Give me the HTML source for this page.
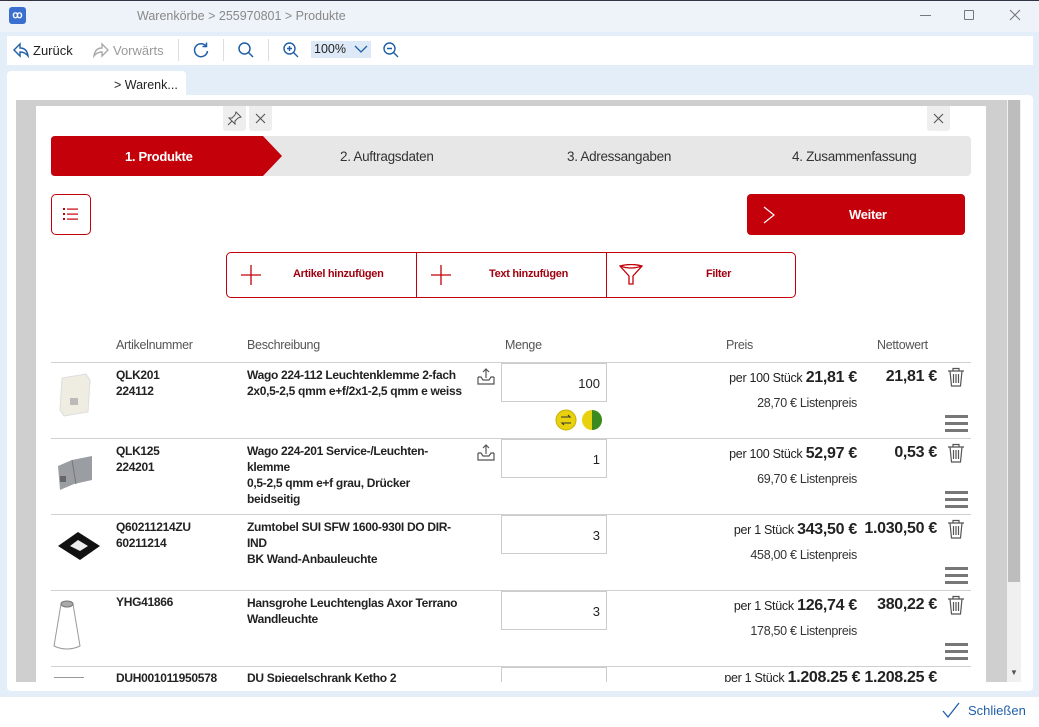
<!DOCTYPE html>
<html><head><meta charset="utf-8"><style>
*{box-sizing:border-box;margin:0;padding:0}
body{width:1039px;height:727px;overflow:hidden;background:#e4eef8;font-family:"Liberation Sans",sans-serif;position:relative;color:#222}
.a{position:absolute}
.t{font-size:12px;letter-spacing:-0.3px}
.b{font-weight:bold}
.hdr{font-size:12.5px;color:#555;letter-spacing:-0.3px}
.sep{position:absolute;left:51px;width:920px;height:1px;background:#d0d0d0}
.qty{position:absolute;left:501px;width:106px;height:39px;border:1px solid #ccc;background:#fff;font-size:13px;text-align:right;padding:12px 6px 0 0;color:#222}
.r{text-align:right}
.ham{position:absolute;left:945px;width:23px;height:3px;background:#777;box-shadow:0 7px 0 #777,0 14px 0 #777}
</style></head><body>
<div class="a" style="left:0;top:0;width:1039px;height:32px;background:#eef3f9;border-top:1px solid #334"></div>
<div class="a" style="left:9px;top:7px;width:17px;height:17px;background:#3a6fd0;border-radius:3px;color:#fff;font-size:10px;font-weight:bold;text-align:center;line-height:17px">ꝏ</div>
<div class="a" style="left:137px;top:9px;font-size:12.5px;color:#888">Warenkörbe &gt; 255970801 &gt; Produkte</div>
<div class="a" style="left:920px;top:15px;width:11px;height:1px;background:#777"></div>
<div class="a" style="left:964px;top:10px;width:10px;height:10px;border:1px solid #777;border-radius:1px"></div>
<svg class="a" style="left:1009px;top:9px" width="12" height="12"><path d="M1 1L11 11M11 1L1 11" stroke="#777" stroke-width="1.1"/></svg>
<div class="a" style="left:7px;top:36px;width:1026px;height:29px;background:#fff"></div>
<svg class="a" style="left:12px;top:42px" width="18" height="16" viewBox="0 0 18 16"><path d="M8 2 L2 8 L8 14 L8 10 Q13 10 16 14 Q15 6 8 6Z" fill="none" stroke="#1f5fa8" stroke-width="1.4"/></svg>
<div class="a" style="left:33px;top:43px;font-size:13px;color:#222">Zurück</div>
<svg class="a" style="left:92px;top:42px" width="18" height="16" viewBox="0 0 18 16"><path d="M10 2 L16 8 L10 14 L10 10 Q5 10 2 14 Q3 6 10 6Z" fill="none" stroke="#aaa" stroke-width="1.4"/></svg>
<div class="a" style="left:113px;top:43px;font-size:13px;color:#999">Vorwärts</div>
<div class="a" style="left:178px;top:39px;width:1px;height:22px;background:#ddd"></div>
<svg class="a" style="left:192px;top:41px" width="18" height="18" viewBox="0 0 18 18"><path d="M14 5 A6.5 6.5 0 1 0 15.5 10" fill="none" stroke="#1f5fa8" stroke-width="1.5"/><path d="M14.5 1.5 L14.5 5.5 L10.5 5.5" fill="none" stroke="#1f5fa8" stroke-width="1.5"/></svg>
<div class="a" style="left:223px;top:39px;width:1px;height:22px;background:#ddd"></div>
<svg class="a" style="left:237px;top:41px" width="18" height="18" viewBox="0 0 18 18"><circle cx="7.5" cy="7.5" r="5.5" fill="none" stroke="#1f5fa8" stroke-width="1.5"/><path d="M11.5 11.5 L16 16" stroke="#1f5fa8" stroke-width="1.5"/></svg>
<div class="a" style="left:268px;top:39px;width:1px;height:22px;background:#ddd"></div>
<svg class="a" style="left:282px;top:41px" width="18" height="18" viewBox="0 0 18 18"><circle cx="7.5" cy="7.5" r="5.5" fill="none" stroke="#1f5fa8" stroke-width="1.4"/><path d="M11.5 11.5 L16 16M5 7.5h5M7.5 5v5" stroke="#1f5fa8" stroke-width="1.4"/></svg>
<div class="a" style="left:311px;top:41px;width:60px;height:17px;background:#dde9f6"></div>
<div class="a" style="left:314px;top:42px;font-size:12.5px;color:#222">100%</div>
<svg class="a" style="left:354px;top:45px" width="14" height="9" viewBox="0 0 14 9"><path d="M1 1 L7 7 L13 1" fill="none" stroke="#1f5fa8" stroke-width="1.3"/></svg>
<svg class="a" style="left:382px;top:41px" width="18" height="18" viewBox="0 0 18 18"><circle cx="7.5" cy="7.5" r="5.5" fill="none" stroke="#1f5fa8" stroke-width="1.4"/><path d="M11.5 11.5 L16 16M5 7.5h5" stroke="#1f5fa8" stroke-width="1.4"/></svg>
<div class="a" style="left:7px;top:71px;width:179px;height:26px;background:#fff;border-radius:4px 4px 0 0"></div>
<div class="a" style="left:114px;top:78px;font-size:12.5px;color:#222">&gt; Warenk...</div>
<div class="a" style="left:7px;top:95px;width:1026px;height:596px;background:#fff;border-radius:0 4px 4px 4px"></div>
<div class="a" style="left:16px;top:100px;width:991px;height:582px;background:#cfcfcf"></div>
<div class="a" style="left:1007px;top:100px;width:14px;height:582px;background:#f0f0f0"></div>
<div class="a" style="left:1008px;top:100px;width:12px;height:482px;background:#bdbdbd"></div>
<div class="a" style="left:1010px;top:668px;font-size:8px;color:#555">▼</div>
<div class="a" style="left:36px;top:106px;width:950px;height:576px;background:#fff"></div>
<div class="a" style="left:223px;top:106px;width:23px;height:25px;background:#eee;border-radius:0 0 3px 3px"></div>
<svg class="a" style="left:227px;top:111px" width="15" height="15" viewBox="0 0 15 15"><path d="M9 1 L14 6 L11 7 L8 10 L8 13 L2 7 L5 7 L8 4Z M5 10 L1 14" fill="none" stroke="#555" stroke-width="1"/></svg>
<div class="a" style="left:249px;top:106px;width:23px;height:25px;background:#eee;border-radius:0 0 3px 3px"></div>
<svg class="a" style="left:255px;top:113px" width="11" height="11"><path d="M1 1L10 10M10 1L1 10" stroke="#555" stroke-width="1.1"/></svg>
<div class="a" style="left:927px;top:106px;width:23px;height:25px;background:#eee;border-radius:0 0 3px 3px"></div>
<svg class="a" style="left:933px;top:113px" width="11" height="11"><path d="M1 1L10 10M10 1L1 10" stroke="#555" stroke-width="1.1"/></svg>
<div class="a" style="left:51px;top:136px;width:920px;height:40px;background:#e7e7e7;border-radius:4px"></div>
<svg class="a" style="left:51px;top:136px" width="232" height="40" viewBox="0 0 232 40"><path d="M4 0 H212 L231 20 L212 40 H4 Q0 40 0 36 V4 Q0 0 4 0Z" fill="#c4000a"/></svg>
<div class="a t b" style="left:125px;top:149px;color:#fff;font-size:13px">1. Produkte</div>
<div class="a t" style="left:340px;top:149px;color:#333;font-size:13.5px">2. Auftragsdaten</div>
<div class="a t" style="left:567px;top:149px;color:#333;font-size:13.5px">3. Adressangaben</div>
<div class="a t" style="left:792px;top:149px;color:#333;font-size:13.5px">4. Zusammenfassung</div>
<div class="a" style="left:51px;top:194px;width:40px;height:41px;border:1px solid #c4000a;border-radius:5px"></div>
<svg class="a" style="left:63px;top:207px" width="16" height="14" viewBox="0 0 16 14"><g fill="#c4000a"><rect x="0" y="1" width="2" height="2"/><rect x="0" y="6" width="2" height="2"/><rect x="0" y="11" width="2" height="2"/><rect x="4" y="1.5" width="11" height="1.2"/><rect x="4" y="6.5" width="11" height="1.2"/><rect x="4" y="11.5" width="11" height="1.2"/></g></svg>
<div class="a" style="left:747px;top:194px;width:218px;height:41px;background:#c4000a;border-radius:4px"></div>
<svg class="a" style="left:762px;top:205px" width="14" height="20" viewBox="0 0 14 20"><path d="M2 2 L12 10 L2 18" fill="none" stroke="#fff" stroke-width="1.2"/></svg>
<div class="a t b" style="left:849px;top:207px;color:#fff;font-size:13px">Weiter</div>
<div class="a" style="left:226px;top:252px;width:570px;height:46px;border:1px solid #c4000a;border-radius:5px"></div>
<div class="a" style="left:416px;top:252px;width:1px;height:46px;background:#c4000a"></div>
<div class="a" style="left:606px;top:252px;width:1px;height:46px;background:#c4000a"></div>
<svg class="a" style="left:240px;top:264px" width="22" height="22"><path d="M11 1V21M1 11H21" stroke="#c4000a" stroke-width="1.3"/></svg>
<svg class="a" style="left:430px;top:264px" width="22" height="22"><path d="M11 1V21M1 11H21" stroke="#c4000a" stroke-width="1.3"/></svg>
<svg class="a" style="left:619px;top:264px" width="24" height="22" viewBox="0 0 24 22"><path d="M1 2 Q12 -1 23 2 L14 12 L14 20 L10 20 L10 12Z M1 2 Q12 6 23 2" fill="none" stroke="#c4000a" stroke-width="1.3"/></svg>
<div class="a t b" style="left:293px;top:268px;color:#a00010;font-size:11px">Artikel hinzufügen</div>
<div class="a t b" style="left:489px;top:268px;color:#a00010;font-size:11px">Text hinzufügen</div>
<div class="a t b" style="left:706px;top:268px;color:#a00010;font-size:11px">Filter</div>
<div class="a hdr" style="left:116px;top:338px">Artikelnummer</div>
<div class="a hdr" style="left:247px;top:338px">Beschreibung</div>
<div class="a hdr" style="left:505px;top:338px">Menge</div>
<div class="a hdr" style="left:726px;top:338px">Preis</div>
<div class="a hdr" style="left:877px;top:338px">Nettowert</div>
<div class="sep" style="top:362px"></div>
<div class="sep" style="top:438px"></div>
<div class="sep" style="top:514px"></div>
<div class="sep" style="top:590px"></div>
<div class="sep" style="top:666px"></div>

<svg class="a" style="left:56px;top:372px" width="36" height="46" viewBox="0 0 36 46"><path d="M6 6 L30 2 L34 8 L32 40 L8 44 L4 38Z" fill="#efece2" stroke="#ddd"/><rect x="14" y="26" width="8" height="7" fill="#bbb"/></svg>
<div class="a t b" style="left:116px;top:367px;line-height:16px">QLK201<br>224112</div>
<div class="a t b" style="left:247px;top:367px;line-height:16px">Wago 224-112 Leuchtenklemme 2-fach<br>2x0,5-2,5 qmm e+f/2x1-2,5 qmm e weiss</div>
<svg class="a" style="left:476px;top:367px" width="20" height="20" viewBox="0 0 20 20"><path d="M2 10 V17 H18 V10 M2 10 L5 10 L7 13 H13 L15 10 H18 M10 11 V2 M7 5 L10 2 L13 5" fill="none" stroke="#555" stroke-width="1.2"/></svg>
<div class="qty" style="top:363px">100</div>
<svg class="a" style="left:555px;top:408px" width="50" height="24" viewBox="0 0 50 24"><circle cx="11" cy="12" r="10" fill="#e8d20f" stroke="#c5b000"/><path d="M6 9 H15 L13 7 M16 15 H7 L9 17" fill="none" stroke="#333" stroke-width="1.1"/><circle cx="37" cy="12" r="10" fill="#e8d20f"/><path d="M37 2 A10 10 0 0 1 37 22Z" fill="#3a8a20"/></svg>
<div class="a t r" style="left:620px;top:369px;width:237px;font-size:13px"><span style="font-size:12.5px">per 100 Stück</span> <b style="font-size:16px">21,81 €</b></div>
<div class="a t r b" style="left:860px;top:368px;width:77px;font-size:16px">21,81 €</div>
<div class="a t r" style="left:620px;top:396px;width:237px;font-size:12.5px;color:#333">28,70 € Listenpreis</div>
<svg class="a" style="left:947px;top:367px" width="18" height="20" viewBox="0 0 18 20"><path d="M1 4 H17 M6 4 V1.5 H12 V4 M3 4 L4.5 19 H13.5 L15 4 M6.5 7 V16 M9 7 V16 M11.5 7 V16" fill="none" stroke="#555" stroke-width="1.2"/></svg>
<div class="ham" style="top:415px"></div>

<svg class="a" style="left:54px;top:452px" width="40" height="42" viewBox="0 0 40 42"><path d="M4 14 L18 8 L38 4 L38 28 L20 32 L6 38Z" fill="#9a9da2"/><path d="M18 8 L22 32" stroke="#777"/><rect x="6" y="24" width="6" height="6" fill="#666"/></svg>
<div class="a t b" style="left:116px;top:443px;line-height:16px">QLK125<br>224201</div>
<div class="a t b" style="left:247px;top:443px;line-height:16px">Wago 224-201 Service-/Leuchten-<br>klemme<br>0,5-2,5 qmm e+f grau, Drücker<br>beidseitig</div>
<svg class="a" style="left:476px;top:443px" width="20" height="20" viewBox="0 0 20 20"><path d="M2 10 V17 H18 V10 M2 10 L5 10 L7 13 H13 L15 10 H18 M10 11 V2 M7 5 L10 2 L13 5" fill="none" stroke="#555" stroke-width="1.2"/></svg>
<div class="qty" style="top:439px">1</div>
<div class="a t r" style="left:620px;top:445px;width:237px;font-size:13px"><span style="font-size:12.5px">per 100 Stück</span> <b style="font-size:16px">52,97 €</b></div>
<div class="a t r b" style="left:860px;top:444px;width:77px;font-size:16px">0,53 €</div>
<div class="a t r" style="left:620px;top:472px;width:237px;font-size:12.5px;color:#333">69,70 € Listenpreis</div>
<svg class="a" style="left:947px;top:443px" width="18" height="20" viewBox="0 0 18 20"><path d="M1 4 H17 M6 4 V1.5 H12 V4 M3 4 L4.5 19 H13.5 L15 4 M6.5 7 V16 M9 7 V16 M11.5 7 V16" fill="none" stroke="#555" stroke-width="1.2"/></svg>
<div class="ham" style="top:491px"></div>

<svg class="a" style="left:56px;top:528px" width="46" height="36" viewBox="0 0 46 36"><path d="M2 18 L22 4 L44 18 L24 32Z" fill="#111"/><path d="M14 18 L22 12 L32 18 L24 23Z" fill="#eee"/></svg>
<div class="a t b" style="left:116px;top:519px;line-height:16px">Q60211214ZU<br>60211214</div>
<div class="a t b" style="left:247px;top:519px;line-height:16px">Zumtobel SUI SFW 1600-930I DO DIR-<br>IND<br>BK Wand-Anbauleuchte</div>
<div class="qty" style="top:515px">3</div>
<div class="a t r" style="left:620px;top:521px;width:237px;font-size:13px"><span style="font-size:12.5px">per 1 Stück</span> <b style="font-size:16px">343,50 €</b></div>
<div class="a t r b" style="left:840px;top:520px;width:97px;font-size:16px">1.030,50 €</div>
<div class="a t r" style="left:620px;top:548px;width:237px;font-size:12.5px;color:#333">458,00 € Listenpreis</div>
<svg class="a" style="left:947px;top:519px" width="18" height="20" viewBox="0 0 18 20"><path d="M1 4 H17 M6 4 V1.5 H12 V4 M3 4 L4.5 19 H13.5 L15 4 M6.5 7 V16 M9 7 V16 M11.5 7 V16" fill="none" stroke="#555" stroke-width="1.2"/></svg>
<div class="ham" style="top:567px"></div>

<svg class="a" style="left:52px;top:598px" width="30" height="54" viewBox="0 0 30 54"><path d="M9 6 L21 6 L28 48 Q15 54 2 48Z" fill="#fff" stroke="#999"/><ellipse cx="15" cy="6" rx="6" ry="3" fill="#aaa" stroke="#777"/></svg>
<div class="a t b" style="left:116px;top:595px">YHG41866</div>
<div class="a t b" style="left:247px;top:595px;line-height:16px">Hansgrohe Leuchtenglas Axor Terrano<br>Wandleuchte</div>
<div class="qty" style="top:591px">3</div>
<div class="a t r" style="left:620px;top:597px;width:237px;font-size:13px"><span style="font-size:12.5px">per 1 Stück</span> <b style="font-size:16px">126,74 €</b></div>
<div class="a t r b" style="left:860px;top:596px;width:77px;font-size:16px">380,22 €</div>
<div class="a t r" style="left:620px;top:624px;width:237px;font-size:12.5px;color:#333">178,50 € Listenpreis</div>
<svg class="a" style="left:947px;top:595px" width="18" height="20" viewBox="0 0 18 20"><path d="M1 4 H17 M6 4 V1.5 H12 V4 M3 4 L4.5 19 H13.5 L15 4 M6.5 7 V16 M9 7 V16 M11.5 7 V16" fill="none" stroke="#555" stroke-width="1.2"/></svg>
<div class="ham" style="top:643px"></div>

<div class="a" style="left:36px;top:667px;width:950px;height:15px;overflow:hidden">
<div class="a t b" style="left:80px;top:4px">DUH001011950578</div>
<div class="a t b" style="left:211px;top:4px">DU Spiegelschrank Ketho 2</div>
<div class="a" style="left:465px;top:0;width:106px;height:20px;border:1px solid #ccc"></div>
<div class="a t r" style="left:584px;top:2px;width:317px;font-size:13px"><span style="font-size:12.5px">per 1 Stück</span> <b style="font-size:16px">1.208,25 € 1.208,25 €</b></div>
<div class="a" style="left:18px;top:10px;width:30px;height:1px;background:#999"></div>
</div>
<div class="a" style="left:0;top:697px;width:1039px;height:30px;background:#fff"></div>
<svg class="a" style="left:942px;top:702px" width="18" height="16" viewBox="0 0 18 16"><path d="M1 9 L6 15 L17 1" fill="none" stroke="#1f5fa8" stroke-width="1.3"/></svg>
<div class="a" style="left:968px;top:703px;font-size:13px;color:#1f5fa8">Schließen</div>
</body></html>
